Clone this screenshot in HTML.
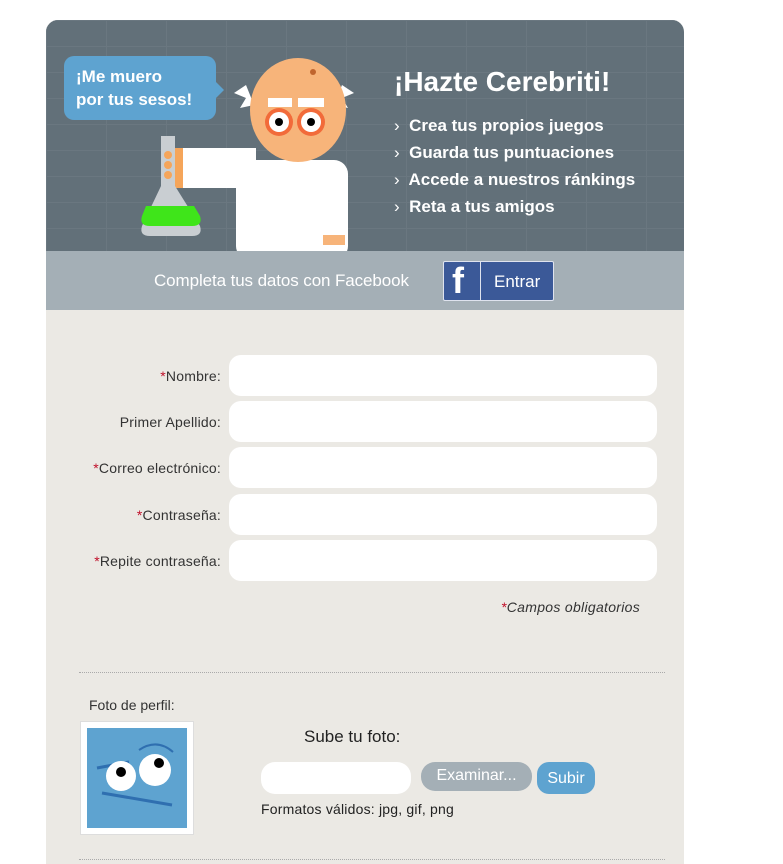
<!DOCTYPE html>
<html><head><meta charset="utf-8"><style>
body{margin:0;background:#fff;font-family:"Liberation Sans",sans-serif;}
.card{position:absolute;left:46px;top:20px;width:638px;height:844px;background:#ebe9e4;border-radius:12px 12px 0 0;overflow:hidden}
.hdr{position:absolute;left:0;top:0;width:638px;height:231px;background:#627079;
background-image:linear-gradient(#6a7780 1px,transparent 1px),linear-gradient(90deg,#6a7780 1px,transparent 1px);background-size:60px 26px}
.fb{position:absolute;left:0;top:231px;width:638px;height:59px;background:#a4afb6}
.fbt{position:absolute;left:108px;top:20px;color:#fff;font-size:17px;letter-spacing:-0.1px}
.fbb{position:absolute;left:397px;top:10px;width:109px;height:38px;background:#3b5998;border:1px solid #dfe3ee;border-radius:2px;color:#fff}
.lab{position:absolute;right:463px;font-size:14px;color:#333;text-align:right;letter-spacing:0.2px}
.lab b{color:#c0102a;font-weight:normal}
.inp{position:absolute;left:183px;width:428px;height:41px;background:#fff;border-radius:12px}
.dot{position:absolute;left:33px;width:586px;border-top:1px dotted #aaa}
</style></head><body>
<div class="card">
<div class="hdr">
 <div style="position:absolute;left:18px;top:36px;width:152px;height:64px;background:#5ea3d0;border-radius:10px;color:#fff;font-size:17px;font-weight:bold;line-height:23px;padding:9px 0 0 12px;box-sizing:border-box">¡Me muero<br>por tus sesos!</div>
 <svg style="position:absolute;left:0;top:0" width="330" height="231">
  <polygon points="170,62 178,70 170,78" fill="#5ea3d0"/>
  <rect x="190" y="140" width="112" height="100" rx="14" fill="#fff"/>
  <rect x="130" y="128" width="80" height="40" fill="#fff"/>
  <rect x="125" y="128" width="12" height="40" fill="#f5a55a"/>
  <path d="M115,116 h14 v50 l25,40 q3,10 -8,10 h-42 q-11,0 -8,-10 l19,-40z" fill="#c9ced2"/>
  <path d="M100,186 h48 l6,10 q3,10 -8,10 h-42 q-11,0 -8,-10z" fill="#3fe51a"/>
  <circle cx="122" cy="145" r="4" fill="#f5a55a"/><circle cx="122" cy="155" r="4" fill="#f5a55a"/><circle cx="122" cy="135" r="4" fill="#f5a55a"/>
  <path d="M200,65 l-12,8 12,5 -6,10 14-3z M296,65 l12,8 -12,5 6,10 -14-3z" fill="#fff"/>
  <ellipse cx="252" cy="90" rx="48" ry="52" fill="#f7b47a"/>
  <circle cx="267" cy="52" r="3" fill="#c0652e"/>
  <rect x="222" y="78" width="24" height="9" fill="#fff"/><rect x="252" y="78" width="26" height="9" fill="#fff"/>
  <circle cx="233" cy="102" r="14" fill="#f26b3a"/><circle cx="265" cy="102" r="14" fill="#f26b3a"/>
  <circle cx="233" cy="102" r="10" fill="#fff"/><circle cx="265" cy="102" r="10" fill="#fff"/>
  <circle cx="233" cy="102" r="4" fill="#000"/><circle cx="265" cy="102" r="4" fill="#000"/>
  <rect x="277" y="215" width="22" height="10" fill="#f7b47a"/>
 </svg>
 <div style="position:absolute;left:348px;top:46px;color:#fff;font-size:28px;font-weight:bold">¡Hazte Cerebriti!</div>
 <div style="position:absolute;left:348px;top:92px;color:#fff;font-size:17px;font-weight:bold;line-height:27px">
 <span style="font-weight:normal">›</span>&nbsp; Crea tus propios juegos<br><span style="font-weight:normal">›</span>&nbsp; Guarda tus puntuaciones<br><span style="font-weight:normal">›</span>&nbsp; Accede a nuestros ránkings<br><span style="font-weight:normal">›</span>&nbsp; Reta a tus amigos</div>
</div>
<div class="fb"><div class="fbt">Completa tus datos con Facebook</div>
 <div class="fbb"><span style="position:absolute;left:8px;top:-2px;font-size:36px;font-weight:bold">f</span><div style="position:absolute;left:36px;top:0;width:1px;height:38px;background:#dfe3ee"></div><span style="position:absolute;left:50px;top:10px;font-size:17px">Entrar</span></div></div>
<div class="lab" style="top:348px"><b>*</b>Nombre:</div><div class="inp" style="top:335px"></div>
<div class="lab" style="top:394px">Primer Apellido:</div><div class="inp" style="top:381px"></div>
<div class="lab" style="top:440px"><b>*</b>Correo electrónico:</div><div class="inp" style="top:427px"></div>
<div class="lab" style="top:487px"><b>*</b>Contraseña:</div><div class="inp" style="top:474px"></div>
<div class="lab" style="top:533px"><b>*</b>Repite contraseña:</div><div class="inp" style="top:520px"></div>
<div style="position:absolute;left:455px;top:579px;font-size:14px;font-style:italic;color:#333;letter-spacing:0.3px"><b style="color:#c0102a;font-weight:normal">*</b>Campos obligatorios</div>
<div class="dot" style="top:652px"></div>
<div style="position:absolute;left:43px;top:677px;font-size:14px;color:#333">Foto de perfil:</div>
<div style="position:absolute;left:34px;top:701px;width:112px;height:112px;background:#fff;border:1px solid #ddd"></div>
<svg style="position:absolute;left:41px;top:708px" width="100" height="100"><rect width="100" height="100" fill="#5ea3d0"/>
 <path d="M10,40 l32,-6 M15,65 l70,12" stroke="#2f6fb0" stroke-width="3"/>
 <circle cx="34" cy="48" r="15" fill="#fff"/><circle cx="68" cy="42" r="16" fill="#fff"/>
 <circle cx="34" cy="44" r="5" fill="#000"/><circle cx="72" cy="35" r="5" fill="#000"/>
 <path d="M52,22 q18,-12 34,2" stroke="#2f6fb0" stroke-width="2" fill="none"/></svg>
<div style="position:absolute;left:258px;top:707px;font-size:17px;color:#222">Sube tu foto:</div>
<div style="position:absolute;left:215px;top:742px;width:150px;height:32px;background:#fff;border-radius:14px"></div>
<div style="position:absolute;left:375px;top:742px;width:111px;height:29px;background:#a4afb6;border-radius:14px;color:#fff;font-size:16px;text-align:center;line-height:28px">Examinar...</div>
<div style="position:absolute;left:491px;top:742px;width:58px;height:32px;background:#5ea3d0;border-radius:12px;color:#fff;font-size:16px;text-align:center;line-height:34px">Subir</div>
<div style="position:absolute;left:215px;top:781px;font-size:14px;color:#222;letter-spacing:0.2px">Formatos válidos: jpg, gif, png</div>
<div class="dot" style="top:839px"></div>
</div>
</body></html>
